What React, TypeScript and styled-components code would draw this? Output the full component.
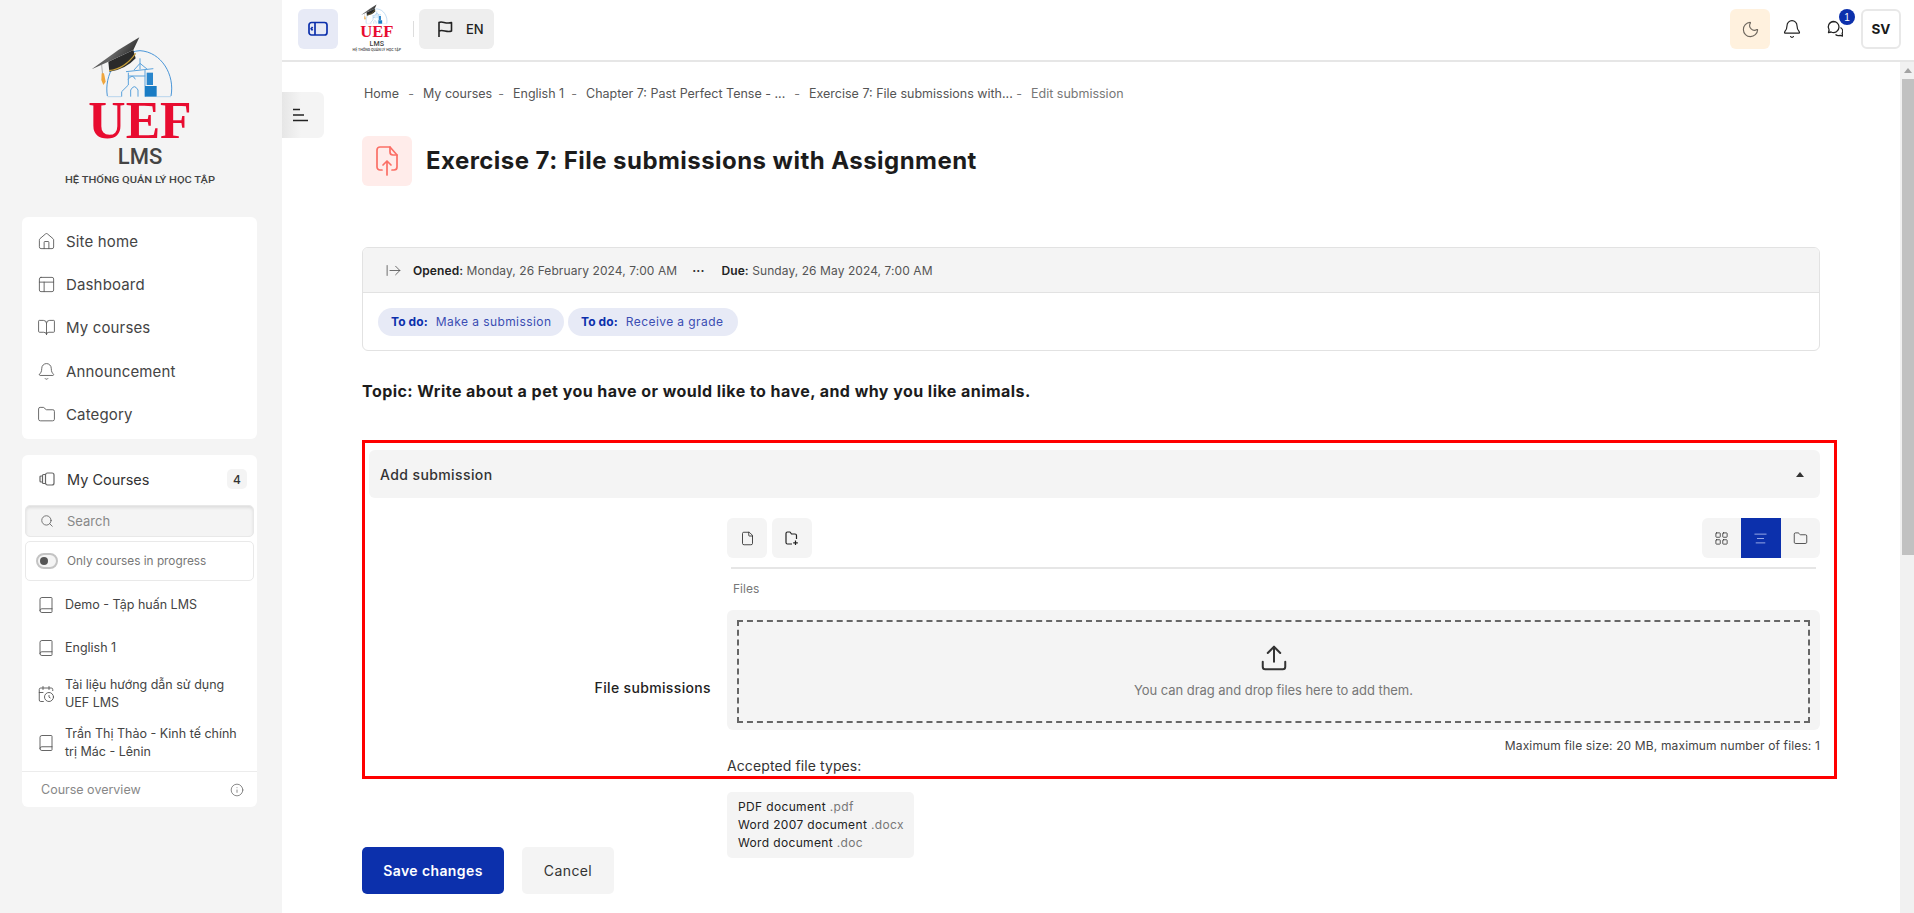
import React from "react";
import styled, { createGlobalStyle } from "styled-components";
import {
  Home, PanelsTopLeft, BookOpen, Bell, Folder, Book, CalendarClock, Search, Info, Moon,
  LayoutGrid, File, Upload, ArrowRightFromLine, AlignCenter,
} from "lucide-react";

const Global = createGlobalStyle`
  html, body { margin: 0; padding: 0; height: 100%; overflow: hidden; background: #fff; }
  body { font-family: Inter, "Noto Sans", sans-serif; color: #333; }
  * { box-sizing: border-box; }
`;

const Page = styled.div`display: flex; height: 100vh; width: 100%;`;

const Sidebar = styled.aside`
  width: 282px; flex: none; background: #f4f4f4; padding: 20px 25px 0 22px;
  display: flex; flex-direction: column;
`;
const LogoWrap = styled.div`margin-left: 38px; width: 180px; height: 180px; margin-bottom: 17px;`;
const Card = styled.section`background: #fff; border-radius: 6px; width: 235px;`;
const NavCard = styled(Card)`padding: 3px 0; height: 222px; margin-bottom: 16px;`;
const NavItem = styled.div`
  display: flex; align-items: center; height: 43.2px; padding-left: 15px; gap: 10px;
  font-size: 15px; color: #444; letter-spacing: 0.15px; svg { color: #555; flex: none; }
`;
const CoursesCard = styled(Card)`height: 352px; display: flex; flex-direction: column;`;
const CoursesHead = styled.div`
  display: flex; align-items: center; height: 48px; padding: 0 10px 0 17px; gap: 12px;
  font-size: 14.5px; font-weight: 400; color: #333; svg { color: #666; }
`;
const CountBadge = styled.span`
  margin-left: auto; width: 20px; height: 20px; background: #f4f4f4; border-radius: 5px;
  font-size: 12px; display: flex; align-items: center; justify-content: center; font-weight: 500;
`;
const SearchBox = styled.div`
  margin: 2px 3px 0; height: 32px; background: #f4f4f4; border: 1px solid #e8e8e8; border-radius: 5px;
  box-shadow: inset 0 2px 3px rgba(0,0,0,.09); display: flex; align-items: center; gap: 13px; padding-left: 14px;
  font-size: 13px; color: #888; svg { color: #666; }
`;
const ProgressBox = styled.div`
  margin: 4px 3px 0; height: 40px; border: 1px solid #e9e9e9; border-radius: 5px;
  display: flex; align-items: center; gap: 9px; padding-left: 10px; font-size: 11.8px; color: #777;
`;
const Toggle = styled.span`
  width: 22px; height: 16px; border: 2px solid #c4c4c4; background: #f4f4f4; border-radius: 9px;
  display: flex; align-items: center; padding-left: 2px;
  &::before { content: ""; width: 8px; height: 8px; border-radius: 50%; background: #555; }
`;
const CourseItem = styled.div<{ $h: number }>`
  display: flex; align-items: center; height: ${(p) => p.$h}px; padding: 0 12px 0 15px; gap: 10px;
  font-size: 12.5px; line-height: 18px; color: #444; svg { color: #555; flex: none; }
`;
const CourseList = styled.div`padding-top: 2px; flex: 1;`;
const CoursesFoot = styled.div`
  height: 36px; border-top: 1px solid #ececec; display: flex; align-items: center;
  justify-content: space-between; padding: 0 13px 0 19px; font-size: 12.5px; color: #888; svg { color: #666; }
`;

const Right = styled.div`flex: 1; min-width: 0; display: flex; flex-direction: column;`;
const Header = styled.header`
  height: 62px; flex: none; border-bottom: 2px solid #e6e6e6; display: flex; align-items: center;
  padding: 0 13px 2px 16px;
`;
const SquareBtn = styled.button<{ $bg?: string; $color?: string }>`
  width: 40px; height: 40px; border: 0; padding: 0; border-radius: 6px; background: ${(p) => p.$bg || "transparent"};
  color: ${(p) => p.$color || "#222"}; display: flex; align-items: center; justify-content: center; position: relative; flex: none;
`;
const MiniLogo = styled.div`margin: -3px 0 0 13px; width: 58px; height: 58px;`;
const HeadSep = styled.span`width: 1px; height: 16px; background: #ddd; margin: 0 5px 0 4px;`;
const LangBtn = styled.button`
  width: 75px; height: 40px; border: 0; border-radius: 6px; background: #eee; color: #222;
  display: flex; align-items: center; gap: 13px; padding: 0 0 0 18px;
  font: 500 13px Inter, sans-serif;
`;
const HeadRight = styled.div`margin-left: auto; display: flex; align-items: center; gap: 2px;`;
const PingBadge = styled.span`
  position: absolute; top: 0; right: -1px; width: 16px; height: 16px; border-radius: 50%;
  background: #0c30ac; color: #fff; font-size: 10px; display: flex; align-items: center; justify-content: center;
`;
const UserBtn = styled(SquareBtn)`
  border: 2px solid #e8e8e8; background: #fff; font: 700 13.5px Inter, sans-serif; color: #1a1a1a; margin-left: 5px;
`;

const Body = styled.div`flex: 1; min-height: 0; display: flex;`;
const Main = styled.main`flex: 1; min-width: 0; position: relative; padding: 21px 80px 0; overflow: hidden;`;
const SideTab = styled.button`
  position: absolute; left: 0; top: 30px; width: 42px; height: 46px; border: 0; padding: 0 6px 0 0;
  border-radius: 0 6px 6px 0; background: linear-gradient(90deg, #e6e6e6, #f4f4f4 45%); color: #222;
  display: flex; align-items: center; justify-content: center;
`;
const Rail = styled.div`
  width: 14px; flex: none; background: #f1f1f1; padding: 0 0 0 2px; display: flex; flex-direction: column; align-items: stretch;
`;
const RailArrow = styled.div`
  height: 17px; display: flex; justify-content: center; padding-top: 6px;
  &::before { content: ""; border: 4px solid transparent; border-top: 0; border-bottom: 5px solid #a3a3a3; height: 0; }
`;
const RailThumb = styled.div`height: 476px; background: #c1c1c1;`;

const Crumbs = styled.nav`display: flex; height: 20px; align-items: center; font-size: 12.5px; color: #555; padding-left: 2px;`;
const Crumb = styled.span<{ $w: number; $last?: boolean }>`
  width: ${(p) => p.$w}px; flex: none; white-space: nowrap; display: flex; justify-content: space-between;
  padding-right: 9px; color: ${(p) => (p.$last ? "#777" : "#555")};
  &::after { content: "${(p) => (p.$last ? "" : "-")}"; color: #777; }
`;
const TitleRow = styled.div`display: flex; align-items: center; gap: 14px; margin-top: 33px;`;
const TitleIcon = styled.div`
  width: 50px; height: 50px; background: #ffecea; border-radius: 6px; color: #fb6f66;
  display: flex; align-items: center; justify-content: center;
`;
const Title = styled.h1`margin: 0; font-size: 24px; line-height: 30px; font-weight: 700; color: #1c1c1c; letter-spacing: 0.45px;`;

const ActivityBox = styled.div`margin-top: 61px; border: 1px solid #e2e2e2; border-radius: 6px; overflow: hidden;`;
const Dates = styled.div`
  height: 45px; background: #f4f4f4; border-bottom: 1px solid #e2e2e2; display: flex; align-items: center;
  padding-left: 22px; font-size: 12px; color: #555; letter-spacing: 0.08px; svg { color: #555; margin-right: 11px; }
  b { color: #222; font-weight: 600; }
`;
const Dots = styled.span`margin: 0 17px 0 15px; color: #333; font-weight: 700;`;
const Todos = styled.div`height: 57px; display: flex; align-items: center; padding-left: 15px; gap: 4px;`;
const Pill = styled.span<{ $w: number }>`
  height: 28px; width: ${(p) => p.$w}px; background: #e7eaf6; border-radius: 14px; padding-left: 13px; display: flex; align-items: center; gap: 8px;
  font-size: 12px; color: #3a4db3; white-space: nowrap; letter-spacing: 0.42px;
  b { color: #0c30ac; font-weight: 700; letter-spacing: 0.1px; }
`;
const Topic = styled.p`margin: 28px 0 0; font-size: 16px; line-height: 24px; font-weight: 700; color: #1c1c1c; letter-spacing: 0.45px;`;

const RedBox = styled.section`
  margin: 37px -17px 0 0; border: 3px solid #f00; padding: 7px 14px 0 4px;
`;
const Bar = styled.div`
  height: 48px; background: #f4f4f4; border-radius: 6px; display: flex; align-items: center; justify-content: space-between;
  padding: 0 16px 0 11px; font-size: 14px; font-weight: 500; color: #333; letter-spacing: 0.4px;
  &::after { content: ""; border: 4px solid transparent; border-top: 0; border-bottom: 5px solid #333; }
`;
const FormRow = styled.div`display: grid; grid-template-columns: 358px 1fr; margin-top: 20px;`;
const FieldLabel = styled.div`
  padding: 161px 16px 0 0; text-align: right; font-size: 14px; line-height: 18px; font-weight: 500; color: #222; letter-spacing: 0.35px;
`;
const Toolbar = styled.div`display: flex; justify-content: space-between;`;
const ToolGroup = styled.div`display: flex; gap: 5px;`;
const ToolBtn = styled(SquareBtn)`background: #f4f4f4;`;
const ViewGroup = styled.div`display: flex; width: 118px; background: #f4f4f4; border-radius: 6px; overflow: hidden;`;
const ViewBtn = styled.button<{ $on?: boolean }>`
  flex: 1; height: 40px; border: 0; padding: 0; display: flex; align-items: center; justify-content: center;
  background: ${(p) => (p.$on ? "#0c30ac" : "transparent")}; color: ${(p) => (p.$on ? "#a9b8ee" : "#333")};
`;
const Divider = styled.div`height: 2px; margin: 9px 4px 0; background: #e6e6e6;`;
const FilesCaption = styled.div`margin: 11px 0 0 6px; font-size: 12px; line-height: 18px; color: #777;`;
const DropArea = styled.div`margin-top: 12px; background: #f4f4f4; border-radius: 6px; padding: 10px 10px 7px; height: 120px;`;
const DropInner = styled.div`
  height: 103px; border: 2px dashed #666; display: flex; flex-direction: column; align-items: center;
  padding-top: 21px; font-size: 13px; line-height: 18px; color: #777; letter-spacing: -0.05px; svg { color: #333; margin-bottom: 8px; }
`;
const Limits = styled.div`margin-top: 8px; text-align: right; font-size: 12px; line-height: 16px; color: #444; letter-spacing: 0.14px;`;
const Accepted = styled.div`margin-top: 2px; font-size: 14px; line-height: 20px; color: #333; letter-spacing: 0.1px;`;

const Footer = styled.div`display: flex; margin-top: 13px;`;
const Actions = styled.div`width: 365px; flex: none; padding-top: 55px; display: flex; gap: 18px; align-items: flex-start;`;
const Action = styled.button<{ $primary?: boolean }>`
  height: 47px; width: ${(p) => (p.$primary ? 142 : 92)}px; border: 0; border-radius: 5px;
  background: ${(p) => (p.$primary ? "#0c30ac" : "#f4f4f4")}; color: ${(p) => (p.$primary ? "#fff" : "#333")};
  font: ${(p) => (p.$primary ? 600 : 400)} 14px Inter, sans-serif; letter-spacing: 0.4px;
`;
const TypesBox = styled.div`
  width: 187px; height: 66px; background: #f4f4f4; border-radius: 5px; padding: 6px 9px 6px 11px;
  font-size: 12px; line-height: 18px; color: #222; white-space: nowrap; letter-spacing: 0.35px; i { font-style: normal; color: #777; }
`;

const Logo = () => (
  <svg viewBox="0 0 540 540" width="100%" height="100%">
    <defs>
      <linearGradient id="capTop" x1="0" y1="0" x2="1" y2="0.5">
        <stop offset="0" stopColor="#222" />
        <stop offset="0.55" stopColor="#666" />
        <stop offset="1" stopColor="#222" />
      </linearGradient>
    </defs>
    <path d="M142 228C132 165 170 96 240 92C305 96 345 165 333 228" fill="none" stroke="#4a96d8" strokeWidth="3" />
    <path d="M142 230H183M290 230H333" fill="none" stroke="#9cc6ea" strokeWidth="2" />
    <path d="M185 230V215L205 195V158M198 155L280 146M240 115V148M222 150L240 130L262 148M206 168H256M212 230V210Q223 190 234 210V230M204 178Q218 160 226 178" fill="none" stroke="#5aa2dc" strokeWidth="3" />
    <path d="M255 150V230" stroke="#5aa2dc" strokeWidth="3" />
    <rect x="260" y="158" width="19" height="37" fill="#2a86cc" />
    <rect x="255" y="198" width="35" height="32" fill="#1a7cc4" />
    <path d="M145 125L148 155Q195 150 227 115L220 90Z" fill="#2a2a2a" />
    <path d="M147 152Q195 146 227 100" fill="none" stroke="#c9a13b" strokeWidth="3.5" />
    <path d="M95 148L175 90L238 52L220 90L145 125Z" fill="url(#capTop)" />
    <path d="M125 135L128 165" stroke="#888" strokeWidth="2" />
    <path d="M125 160L132 160L137 185L130 195L124 180Z" fill="#f0a63c" />
    <text x="85" y="355" fontFamily="'Liberation Serif', serif" fontWeight="700" fontSize="160" textLength="310" lengthAdjust="spacingAndGlyphs" fill="#e80c30">UEF</text>
    <text x="240" y="433" textAnchor="middle" fontFamily="Roboto, sans-serif" fontWeight="500" fontSize="66" textLength="134" fill="#444">LMS</text>
    <text x="15" y="488" fontFamily="Roboto, sans-serif" fontWeight="500" fontSize="29" textLength="450" lengthAdjust="spacingAndGlyphs" fill="#444">HỆ THỐNG QUẢN LÝ HỌC TẬP</text>
  </svg>
);

const LibraryIcon = () => (
  <svg width="16" height="16" viewBox="0 0 16 16" fill="none" stroke="currentColor" strokeWidth="1.2">
    <rect x="6.5" y="2" width="8.5" height="12" rx="2" />
    <path d="M6.5 3.5H4.5a1 1 0 0 0-1 1v7a1 1 0 0 0 1 1h2M3.5 5H2a1 1 0 0 0-1 1v4a1 1 0 0 0 1 1h1.5" />
  </svg>
);
const SidebarIcon = () => (
  <svg width="20" height="16" viewBox="0 0 20 16" fill="none" stroke="currentColor" strokeWidth="1.7">
    <rect x="1" y="1.5" width="18" height="12.5" rx="2.5" />
    <path d="M7 1.5V14" />
    <path d="M4.6 6L3.2 7.7L4.6 9.4" />
  </svg>
);
const FlagIcon = () => (
  <svg width="16" height="18" viewBox="0 0 16 18" fill="none" stroke="currentColor" strokeWidth="1.6" strokeLinejoin="round">
    <path d="M2 17V2.5C5 0.5 9 4.5 14.5 2.5V11C10 13 6 9 2 11" />
  </svg>
);
const ChatIcon = () => (
  <svg width="18" height="18" viewBox="-1.5 0 18 18" fill="none" stroke="currentColor" strokeWidth="1.3" strokeLinejoin="round">
    <path d="M7 1.5A5.5 5.5 0 0 1 12.5 7A5.5 5.5 0 0 1 4.6 12L2 12.6L2.6 10A5.5 5.5 0 0 1 7 1.5Z" />
    <path d="M14 7.5A4.5 4.5 0 0 1 15.6 13.5L16.4 16L13.5 15.4A4.5 4.5 0 0 1 9 14.5" />
  </svg>
);
const StepsIcon = () => (
  <svg width="16" height="14" viewBox="0 0 16 14" fill="none" stroke="currentColor" strokeWidth="1.3">
    <path d="M1 1.5H8M1 7H12M1 12.5H16" />
  </svg>
);
const FileUploadIcon = () => (
  <svg width="22" height="30" viewBox="0 0 22 30" fill="none" stroke="currentColor" strokeWidth="1.7" strokeLinecap="round" strokeLinejoin="round">
    <path d="M6 24H4a3 3 0 0 1-3-3V4a3 3 0 0 1 3-3H14L21 9V21a3 3 0 0 1-3 3H16" />
    <path d="M14 1V6a3 3 0 0 0 3 3H21" />
    <path d="M11 29V15M7 19L11 15L15 19" />
  </svg>
);
const NewFolderIcon = () => (
  <svg width="14" height="15" viewBox="0 0 14 15" fill="none" stroke="currentColor" strokeWidth="1.2" strokeLinejoin="round">
    <path d="M7 13H2.5A1.5 1.5 0 0 1 1 11.5V2.5A1.5 1.5 0 0 1 2.5 1H5L6.5 3H10A1.5 1.5 0 0 1 11.5 4.5V8" />
    <path d="M10.5 9.5V14M8.2 11.8H12.8" />
  </svg>
);

const navItems = [
  { label: "Site home", Icon: Home },
  { label: "Dashboard", Icon: PanelsTopLeft },
  { label: "My courses", Icon: BookOpen },
  { label: "Announcement", Icon: Bell },
  { label: "Category", Icon: Folder },
];

export default function App() {
  return (
    <Page>
      <Global />
      <Sidebar>
        <LogoWrap><Logo /></LogoWrap>
        <NavCard>
          {navItems.map(({ label, Icon }) => (
            <NavItem key={label}><Icon size={19} strokeWidth={1.1} />{label}</NavItem>
          ))}
        </NavCard>
        <CoursesCard>
          <CoursesHead><LibraryIcon />My Courses<CountBadge>4</CountBadge></CoursesHead>
          <SearchBox><Search size={14} strokeWidth={1.5} />Search</SearchBox>
          <ProgressBox><Toggle />Only courses in progress</ProgressBox>
          <CourseList>
            <CourseItem $h={43}><Book size={18} strokeWidth={1.2} />Demo - Tập huấn LMS</CourseItem>
            <CourseItem $h={43}><Book size={18} strokeWidth={1.2} />English 1</CourseItem>
            <CourseItem $h={49}><CalendarClock size={18} strokeWidth={1.2} /><span>Tài liệu hướng dẫn sử dụng<br />UEF LMS</span></CourseItem>
            <CourseItem $h={49}><Book size={18} strokeWidth={1.2} /><span>Trần Thị Thảo - Kinh tế chính<br />trị Mác - Lênin</span></CourseItem>
          </CourseList>
          <CoursesFoot>Course overview<Info size={14} strokeWidth={1.3} /></CoursesFoot>
        </CoursesCard>
      </Sidebar>
      <Right>
        <Header>
          <SquareBtn $bg="#e7eaf6" $color="#0c30ac"><SidebarIcon /></SquareBtn>
          <MiniLogo><Logo /></MiniLogo>
          <HeadSep />
          <LangBtn><FlagIcon />EN</LangBtn>
          <HeadRight>
            <SquareBtn $bg="#fff1de" $color="#6e675e"><Moon size={19} strokeWidth={1.4} /></SquareBtn>
            <SquareBtn><Bell size={20} strokeWidth={1.4} /></SquareBtn>
            <SquareBtn><ChatIcon /><PingBadge>1</PingBadge></SquareBtn>
            <UserBtn>SV</UserBtn>
          </HeadRight>
        </Header>
        <Body>
          <Main>
            <SideTab><StepsIcon /></SideTab>
            <Crumbs>
              <Crumb $w={59}>Home</Crumb>
              <Crumb $w={90}>My courses</Crumb>
              <Crumb $w={73}>English 1</Crumb>
              <Crumb $w={223}>Chapter 7: Past Perfect Tense - ...</Crumb>
              <Crumb $w={222}>Exercise 7: File submissions with...</Crumb>
              <Crumb $w={110} $last>Edit submission</Crumb>
            </Crumbs>
            <TitleRow>
              <TitleIcon><FileUploadIcon /></TitleIcon>
              <Title>Exercise 7: File submissions with Assignment</Title>
            </TitleRow>
            <ActivityBox>
              <Dates>
                <ArrowRightFromLine size={17} strokeWidth={1.2} />
                <span><b>Opened:</b> Monday, 26 February 2024, 7:00 AM</span>
                <Dots>···</Dots>
                <span><b>Due:</b> Sunday, 26 May 2024, 7:00 AM</span>
              </Dates>
              <Todos>
                <Pill $w={186}><b>To do:</b>Make a submission</Pill>
                <Pill $w={170}><b>To do:</b>Receive a grade</Pill>
              </Todos>
            </ActivityBox>
            <Topic>Topic: Write about a pet you have or would like to have, and why you like animals.</Topic>
            <RedBox>
              <Bar>Add submission</Bar>
              <FormRow>
                <FieldLabel>File submissions</FieldLabel>
                <div>
                  <Toolbar>
                    <ToolGroup>
                      <ToolBtn><File size={15} strokeWidth={1.3} /></ToolBtn>
                      <ToolBtn><NewFolderIcon /></ToolBtn>
                    </ToolGroup>
                    <ViewGroup>
                      <ViewBtn><LayoutGrid size={15} strokeWidth={1.3} /></ViewBtn>
                      <ViewBtn $on><AlignCenter size={15} strokeWidth={1.4} /></ViewBtn>
                      <ViewBtn><Folder size={15} strokeWidth={1.3} /></ViewBtn>
                    </ViewGroup>
                  </Toolbar>
                  <Divider />
                  <FilesCaption>Files</FilesCaption>
                  <DropArea>
                    <DropInner>
                      <Upload size={30} strokeWidth={1.6} />
                      You can drag and drop files here to add them.
                    </DropInner>
                  </DropArea>
                  <Limits>Maximum file size: 20 MB, maximum number of files: 1</Limits>
                  <Accepted>Accepted file types:</Accepted>
                </div>
              </FormRow>
            </RedBox>
            <Footer>
              <Actions>
                <Action $primary>Save changes</Action>
                <Action>Cancel</Action>
              </Actions>
              <TypesBox>
                PDF document <i>.pdf</i><br />
                Word 2007 document <i>.docx</i><br />
                Word document <i>.doc</i>
              </TypesBox>
            </Footer>
          </Main>
          <Rail><RailArrow /><RailThumb /></Rail>
        </Body>
      </Right>
    </Page>
  );
}
